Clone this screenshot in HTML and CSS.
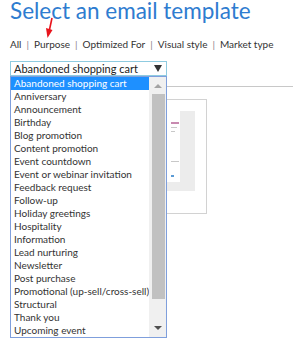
FILE: index.html
```html
<!DOCTYPE html>
<html>
<head>
<meta charset="utf-8">
<link rel="stylesheet" href="styles.css">
</head>
<body>
<div class="page">
  <h1 class="title">Select an email template</h1>
  <svg class="arrow" width="12" height="26" viewBox="0 0 12 26">
    <line x1="8" y1="1" x2="5.2" y2="14" stroke="#e8141c" stroke-width="1.6"/>
    <polygon points="2,11 8.5,13 3.5,21" fill="#e8141c"/>
  </svg>
  <nav class="filters">
    <span class="f">All</span><span class="sep">|</span>
    <span class="f">Purpose</span><span class="sep">|</span>
    <span class="f">Optimized For</span><span class="sep">|</span>
    <span class="f">Visual style</span><span class="sep">|</span>
    <span class="f">Market type</span>
  </nav>
  <div class="picker">
    <div class="select"><span class="value">Abandoned shopping cart</span><span class="caret"></span></div>
    <div class="content">
      <div class="rule"></div>
      <div class="card">
        <div class="thumb">
          <div class="sheet">
            <div class="ln pink"></div>
            <div class="ln gray s"></div>
            <div class="ln gray xs"></div>
            <div class="ln gray gap"></div>
            <div class="ln blue"></div>
          </div>
        </div>
      </div>
    </div>
    <div class="listbox">
      <ul class="options">
        <li class="sel">Abandoned shopping cart</li>
        <li>Anniversary</li>
        <li>Announcement</li>
        <li>Birthday</li>
        <li>Blog promotion</li>
        <li>Content promotion</li>
        <li>Event countdown</li>
        <li>Event or webinar invitation</li>
        <li>Feedback request</li>
        <li>Follow-up</li>
        <li>Holiday greetings</li>
        <li>Hospitality</li>
        <li>Information</li>
        <li>Lead nurturing</li>
        <li>Newsletter</li>
        <li>Post purchase</li>
        <li>Promotional (up-sell/cross-sell)</li>
        <li>Structural</li>
        <li>Thank you</li>
        <li>Upcoming event</li>
      </ul>
      <div class="scrollbar">
        <span class="sb-up"></span>
        <span class="sb-thumb"></span>
        <span class="sb-down"></span>
      </div>
    </div>
  </div>
</div>
</body>
</html>
```
FILE: styles.css
```css
* { box-sizing: border-box; }
html, body { margin: 0; padding: 0; background: #fff; }
body { font-family: "Lato", "Open Sans", sans-serif; color: #333; }
.page { position: relative; padding: 0 0 0 10px; width: 293px; height: 356px; overflow: hidden; }
.title {
  margin: 0; font-weight: 400; font-size: 22.5px; line-height: 24px;
  color: #2e7cd0; padding-top: 0; position: relative; top: -1px;
}
.arrow { position: absolute; left: 44px; top: 17px; }
.filters {
  margin-top: 13px; font-size: 10px; line-height: 14px; color: #333;
  display: flex; gap: 5px; white-space: nowrap;
}
.sep { color: #8a7f88; }
.picker { position: relative; margin-top: 10px; width: 283px; }
.select {
  width: 157px; height: 15px; border: 1px solid #8fcbe0;
  display: flex; align-items: center; justify-content: space-between;
  padding: 0 4px 0 3px; font-size: 11px; line-height: 13px; color: #222;
}
.caret {
  width: 0; height: 0; border-left: 4px solid transparent; border-right: 4px solid transparent;
  border-top: 7px solid #333;
}
.content { padding-top: 10px; }
.rule { height: 1px; background: #c8c8c8; margin-right: -10px; }
.card {
  margin: 12px 0 0 110px; width: 87px; height: 115px; border: 1px solid #d2d2d2;
  padding: 11px 11px 0 0;
}
.thumb { height: 80px; background: #ececec; padding: 0 15px 9px 0; }
.sheet { height: 71px; background: #fff; padding: 11px 0 0 50px; display: flex; flex-direction: column; gap: 3px; }
.ln { height: 1px; width: 8px; }
.pink { background: #c88ab0; height: 2px; }
.gray { background: #c8c8c8; }
.s { width: 6px; }
.xs { width: 4px; }
.gap { margin-top: 26px; }
.blue { background: #5b9bd5; margin-top: 10px; height: 2px; width: 3px; }
.listbox {
  position: absolute; left: 0; top: 15px; width: 157px; height: 262px;
  border: 1px solid #7f9fdc; background: #fff;
  display: grid; grid-template-columns: 1fr 17px;
}
.options { list-style: none; margin: 0; padding: 0; font-size: 10px; line-height: 13px; color: #333; }
.options li { height: 13px; padding-left: 3px; white-space: nowrap; }
.options li.sel { background: #1e90ff; color: #fff; }
.scrollbar { background: #f0f0f0; display: flex; flex-direction: column; align-items: center; }
.sb-up {
  margin-top: 7px; width: 0; height: 0; border-left: 4px solid transparent; border-right: 4px solid transparent;
  border-bottom: 4px solid #a3a3a3;
}
.sb-thumb { margin-top: 6px; width: 13px; margin-left: 1px; height: 205px; background: #c1c1c1; }
.sb-down {
  margin-top: 27px; width: 0; height: 0; border-left: 4px solid transparent; border-right: 4px solid transparent;
  border-top: 4px solid #505050;
}
```
